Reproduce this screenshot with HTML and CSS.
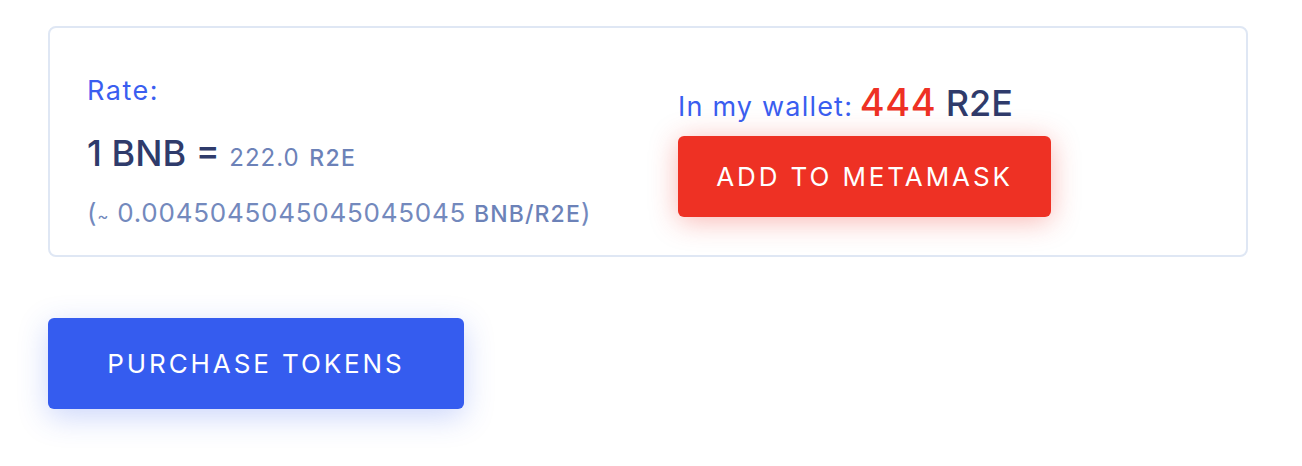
FILE: index.html
```html
<!DOCTYPE html>
<html lang="en">
<head>
<meta charset="utf-8">
<title>Token sale</title>
<link rel="stylesheet" href="styles.css">
</head>
<body>
<main class="page">
  <section class="card">
    <div class="rate">
      <div class="rate-label">Rate:</div>
      <div class="rate-main"><span class="rate-bnb">1 BNB =</span> <span class="rate-val">222.0</span> <span class="unit">R2E</span></div>
      <div class="rate-inv">(<span class="tilde">~</span> 0.0045045045045045045 <span class="unit unit-inv">BNB/R2E</span>)</div>
    </div>
    <div class="wallet">
      <div class="wallet-line"><span class="wallet-label">In my wallet:</span> <span class="wallet-amount">444</span> <span class="wallet-unit">R2E</span></div>
      <button class="btn btn-red">ADD TO METAMASK</button>
    </div>
  </section>
  <button class="btn btn-blue">PURCHASE TOKENS</button>
</main>
</body>
</html>
```
FILE: styles.css
```css
* { box-sizing: border-box; }
html, body { margin: 0; background: #ffffff; }
body { font-family: "Inter", "Open Sans", sans-serif; }
.page {
  min-height: 466px;
  padding: 26px 54px 0 48px;
  display: flex;
  flex-direction: column;
  align-items: flex-start;
  gap: 61px;
}
.card {
  width: 1200px;
  height: 231px;
  border: 2px solid #dfe7f4;
  border-radius: 8px;
  display: grid;
  grid-template-columns: 591px 1fr;
  align-items: start;
  padding: 47px 37px 0;
}
.rate { display: flex; flex-direction: column; }
.rate-label { color: #3a5ef0; font-size: 27px; line-height: 32px; letter-spacing: 1.5px; }
.rate-main {
  margin-top: 24px;
  color: #2f3b6b;
  font-size: 36px;
  line-height: 44px;
  font-weight: 500;
  white-space: nowrap;
}
.rate-val { color: #6c82b8; font-size: 24px; font-weight: 400; letter-spacing: 1px; }
.unit { color: #6c82b8; font-size: 23px; font-weight: 500; letter-spacing: 1.3px; }
.rate-inv {
  margin-top: 17px;
  color: #7389bd;
  font-size: 26px;
  line-height: 32px;
  letter-spacing: 0.75px;
  white-space: nowrap;
}
.unit-inv { font-size: 23px; letter-spacing: 1.1px; }
.tilde { font-size: 17px; }
.wallet {
  margin-top: 5px;
  display: flex;
  flex-direction: column;
  align-items: flex-start;
  gap: 11px;
}
.wallet-line { font-size: 38px; line-height: 44px; white-space: nowrap; word-spacing: -4px; }
.wallet-label { color: #3a5ef0; font-size: 27px; line-height: 1; letter-spacing: 1.2px; word-spacing: normal; }
.wallet-amount { color: #ee3124; font-size: 38px; font-weight: 500; letter-spacing: 0.5px; }
.wallet-unit { color: #2f3b6b; font-size: 36px; font-weight: 500; margin-left: 3px; }
.btn {
  border: none;
  border-radius: 6px;
  color: #ffffff;
  font-family: "Inter", "Open Sans", sans-serif;
  font-size: 26px;
  letter-spacing: 2.9px;
  cursor: pointer;
}
.btn-red {
  width: 373px;
  height: 81px;
  background: #ee3124;
  box-shadow: 0 4px 28px rgba(238, 49, 36, 0.35);
}
.btn-blue {
  width: 416px;
  height: 91px;
  background: #355cef;
  box-shadow: 0 8px 30px rgba(53, 92, 239, 0.25);
}
```
